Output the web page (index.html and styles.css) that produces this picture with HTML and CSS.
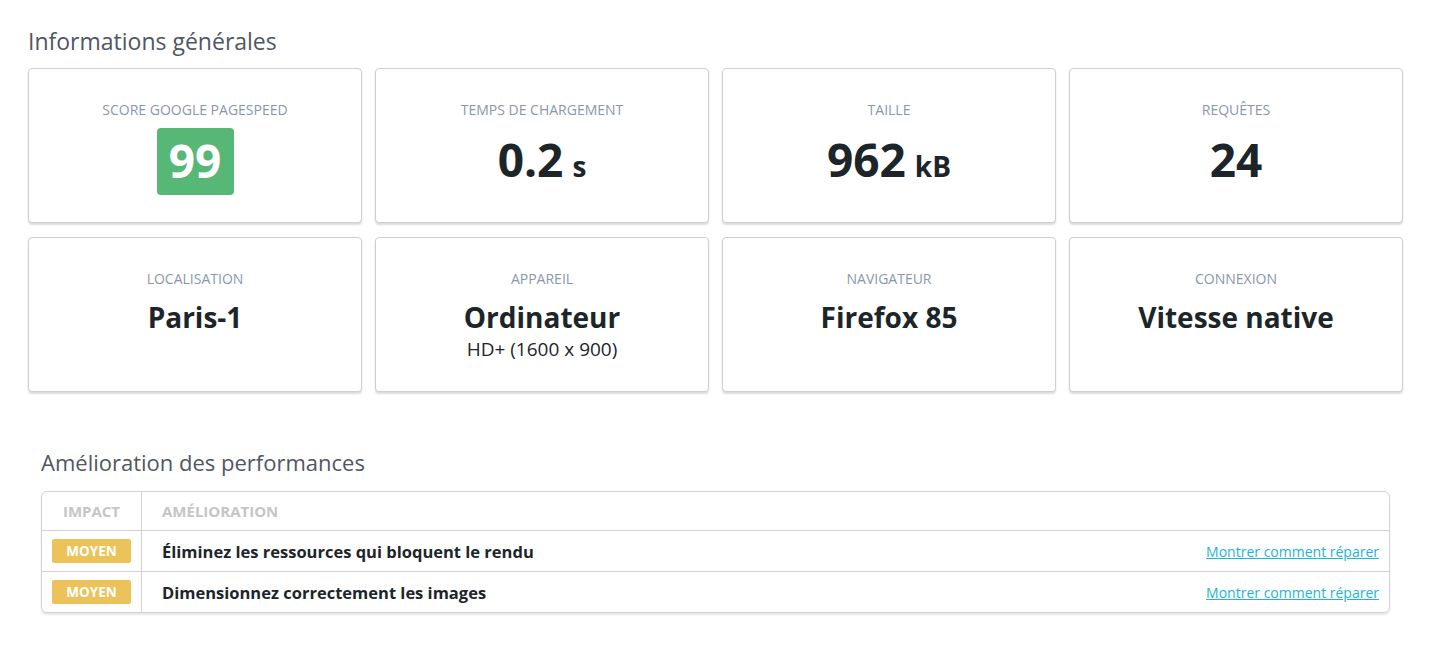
FILE: index.html
```html
<!DOCTYPE html>
<html lang="fr">
<head>
<meta charset="utf-8">
<title>Informations générales</title>
<link rel="stylesheet" href="styles.css">
</head>
<body>
<div class="page">
  <h2 class="section-title">Informations générales</h2>
  <div class="cards">
    <div class="card">
      <div class="label">Score Google PageSpeed</div>
      <div class="value-row"><span class="score">99</span></div>
    </div>
    <div class="card">
      <div class="label">Temps de chargement</div>
      <div class="value-row"><span class="big">0.2</span><span class="unit">s</span></div>
    </div>
    <div class="card">
      <div class="label">Taille</div>
      <div class="value-row"><span class="big">962</span><span class="unit">kB</span></div>
    </div>
    <div class="card">
      <div class="label">Requêtes</div>
      <div class="value-row"><span class="big">24</span></div>
    </div>
    <div class="card">
      <div class="label">Localisation</div>
      <div class="value">Paris-1</div>
    </div>
    <div class="card">
      <div class="label">Appareil</div>
      <div class="value">Ordinateur</div>
      <div class="sub">HD+ (1600 x 900)</div>
    </div>
    <div class="card">
      <div class="label">Navigateur</div>
      <div class="value">Firefox 85</div>
    </div>
    <div class="card">
      <div class="label">Connexion</div>
      <div class="value">Vitesse native</div>
    </div>
  </div>

  <section class="perf">
    <h2 class="section-title small">Amélioration des performances</h2>
    <table class="perf-table">
      <thead>
        <tr><th class="col-impact">Impact</th><th class="col-imp" colspan="2">Amélioration</th></tr>
      </thead>
      <tbody>
        <tr>
          <td class="col-impact"><span class="badge">Moyen</span></td>
          <td class="col-imp">Éliminez les ressources qui bloquent le rendu</td>
          <td class="col-link"><a href="#">Montrer comment réparer</a></td>
        </tr>
        <tr>
          <td class="col-impact"><span class="badge">Moyen</span></td>
          <td class="col-imp">Dimensionnez correctement les images</td>
          <td class="col-link"><a href="#">Montrer comment réparer</a></td>
        </tr>
      </tbody>
    </table>
  </section>
</div>
</body>
</html>
```

FILE: styles.css
```css
* { box-sizing: border-box; }
html, body { margin: 0; background: #fff; }
body {
  font-family: "Open Sans", "Noto Sans", "DejaVu Sans", sans-serif;
  color: #1c2529;
}
.page { padding: 26px 28px 20px; }

.section-title {
  margin: 0 0 12px;
  font-size: 23px;
  line-height: 30px;
  font-weight: 400;
  color: #4f5762;
}
.section-title.small { font-size: 22px; }

.cards {
  display: grid;
  grid-template-columns: repeat(4, 1fr);
  gap: 14px 13px;
}
.card {
  height: 155px;
  border: 1px solid #cfcfcf;
  border-radius: 4px;
  box-shadow: 0 2px 2px rgba(0, 0, 0, 0.14);
  padding-top: 31px;
  text-align: center;
  background: #fff;
}
.label {
  font-size: 14px;
  line-height: 20px;
  text-transform: uppercase;
  color: #8898ac;
}
.value-row {
  margin-top: 8px;
  height: 67px;
  display: flex;
  align-items: baseline;
  justify-content: center;
}
.value-row .big {
  font-size: 46px;
  line-height: 62px;
  font-weight: 700;
  color: #1c2529;
}
.value-row .unit {
  font-size: 28px;
  font-weight: 700;
  margin-left: 9px;
  color: #1c2529;
}
.score {
  display: flex;
  align-items: center;
  justify-content: center;
  width: 77px;
  height: 67px;
  border-radius: 4px;
  background: #56b776;
  color: #fff;
  font-size: 46px;
  font-weight: 700;
  line-height: 1;
  padding-bottom: 4px;
}
.value {
  margin-top: 10px;
  font-size: 28px;
  line-height: 36px;
  font-weight: 700;
}
.sub {
  margin-top: 2px;
  font-size: 19px;
  line-height: 24px;
  color: #1c2529;
}

.perf {
  margin: 55px 13px 0;
}
.perf .section-title { margin-bottom: 14px; }
.perf-table {
  width: 100%;
  border-collapse: separate;
  border-spacing: 0;
  border: 1px solid #d2d2d2;
  border-radius: 6px;
  box-shadow: 0 2px 2px rgba(0, 0, 0, 0.1);
}
.perf-table th {
  height: 38px;
  font-size: 15px;
  font-weight: 700;
  text-transform: uppercase;
  color: #c5c5c5;
  text-align: left;
  padding: 0 20px;
}
.perf-table td {
  height: 41px;
  border-top: 1px solid #d2d2d2;
  padding: 0 20px;
}
.perf-table .col-impact {
  width: 100px;
  text-align: center;
  padding: 0;
  border-right: 1px solid #d2d2d2;
}
.perf-table td.col-imp {
  font-size: 16.5px;
  font-weight: 700;
  color: #1c2529;
}
.perf-table td.col-link {
  text-align: right;
  padding-right: 10px;
}
.col-link a {
  font-size: 14px;
  color: #1bb5d6;
  text-decoration: underline;
}
.badge {
  display: inline-block;
  width: 79px;
  height: 24px;
  line-height: 24px;
  border-radius: 2px;
  background: #ecc35b;
  color: #fff;
  font-size: 13.5px;
  font-weight: 700;
  text-transform: uppercase;
}
```
